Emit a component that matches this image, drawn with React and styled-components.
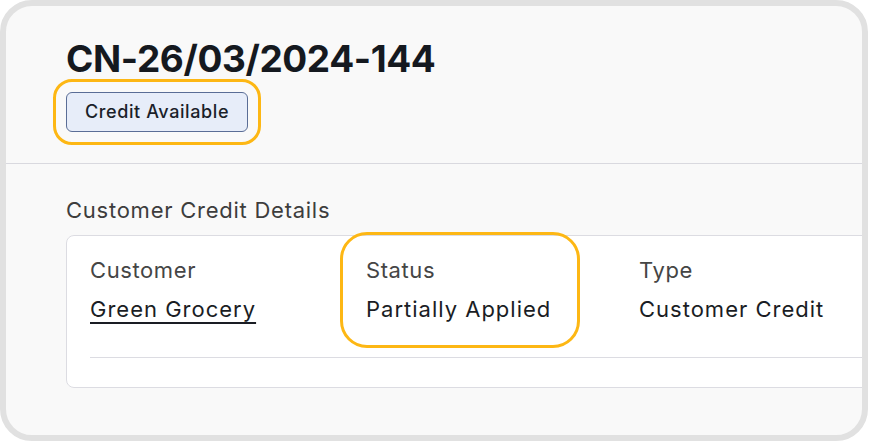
import React from "react";
import styled, { createGlobalStyle } from "styled-components";

const GlobalStyle = createGlobalStyle`
  body {
    margin: 0;
    background: #fff;
    font-family: Inter, "Liberation Sans", sans-serif;
  }
`;

const Frame = styled.div`
  box-sizing: border-box;
  width: 868px;
  height: 441px;
  border: 6px solid #e1e1e1;
  border-radius: 32px;
  background: #f9f9f9;
  overflow: hidden;
`;

const Header = styled.header`
  padding: 30px 0 0 60px;
  height: 158px;
  box-sizing: border-box;
  border-bottom: 1px solid #d9d9df;
`;

const Title = styled.h1`
  margin: 0;
  font-size: 37px;
  line-height: 46px;
  font-weight: 700;
  color: #15191f;
  letter-spacing: -0.4px;
`;

const Badge = styled.span`
  display: inline-block;
  margin-top: 10px;
  padding: 0 18px;
  height: 40px;
  line-height: 38px;
  box-sizing: border-box;
  background: #e7edf9;
  border: 1px solid #5a6d96;
  border-radius: 6px;
  font-size: 18px;
  font-weight: 500;
  letter-spacing: 0.6px;
  color: #1b1f2a;
  ${(p) => p.$highlighted && `
    outline: 3px solid #fdb714;
    outline-offset: 10px;
  `}
`;

const Section = styled.section`
  padding: 33px 0 0 60px;
`;

const SectionTitle = styled.h2`
  margin: 0 0 12px;
  font-size: 22px;
  line-height: 26px;
  font-weight: 400;
  letter-spacing: 0.75px;
  color: #3d3d3d;
`;

const Card = styled.div`
  width: 900px;
  background: #fff;
  border: 1px solid #dcdce2;
  border-radius: 8px;
  padding: 22px 0 29px 23px;
`;

const FieldRow = styled.div`
  display: grid;
  grid-template-columns: 276px 273px 1fr;
  padding-bottom: 35px;
  border-bottom: 1px solid #dcdce2;
`;

const Field = styled.div`
  display: flex;
  flex-direction: column;
  gap: 14px;
  width: 188px;
  ${(p) => p.$highlighted && `
    outline: 3px solid #fdb714;
    outline-offset: 23px;
    border-radius: 1px;
  `}
`;

const Label = styled.span`
  font-size: 22px;
  line-height: 24px;
  letter-spacing: 0.6px;
  color: #454545;
`;

const Value = styled.span`
  font-size: 22px;
  line-height: 26px;
  letter-spacing: 1px;
  color: #1a1d24;
  white-space: nowrap;
  ${(p) => p.$link && `
    text-decoration: underline;
    text-underline-offset: 5px;
    text-decoration-thickness: 2px;
  `}
`;

export default function App() {
  return (
    <>
      <GlobalStyle />
      <Frame>
        <Header>
          <Title>CN-26/03/2024-144</Title>
          <Badge $highlighted>Credit Available</Badge>
        </Header>
        <Section>
          <SectionTitle>Customer Credit Details</SectionTitle>
          <Card>
            <FieldRow>
              <Field>
                <Label>Customer</Label>
                <Value $link>Green Grocery</Value>
              </Field>
              <Field $highlighted>
                <Label>Status</Label>
                <Value>Partially Applied</Value>
              </Field>
              <Field>
                <Label>Type</Label>
                <Value>Customer Credit</Value>
              </Field>
            </FieldRow>
          </Card>
        </Section>
      </Frame>
    </>
  );
}
